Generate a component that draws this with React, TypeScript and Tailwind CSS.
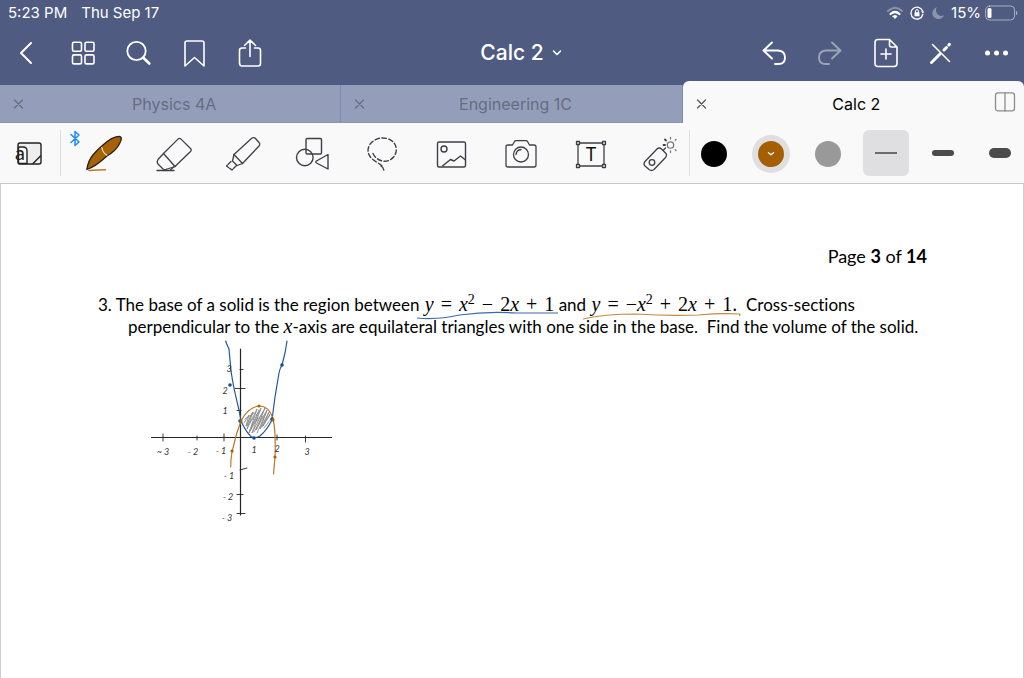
import React from 'react'
import type { ReactNode } from 'react'

interface IconProps {
  w: number
  h: number
  stroke?: number
  className?: string
  children: ReactNode
}

function Icon({ w, h, stroke = 1.6, className = '', children }: IconProps) {
  return (
    <svg
      width={w}
      height={h}
      viewBox={`0 0 ${w} ${h}`}
      fill="none"
      stroke="currentColor"
      strokeWidth={stroke}
      strokeLinecap="round"
      strokeLinejoin="round"
      className={className}
      aria-hidden="true"
    >
      {children}
    </svg>
  )
}

interface Action {
  label: string
  icon: ReactNode
  dim?: boolean
}

const LEFT_ACTIONS: Action[] = [
  {
    label: 'Back',
    icon: (
      <Icon w={28} h={28} stroke={2}>
        <path d="M19 4 9 14l10 10" />
      </Icon>
    ),
  },
  {
    label: 'Thumbnails',
    icon: (
      <Icon w={28} h={28}>
        <rect x="4.500" y="3.300" width="9" height="9" rx="1.5" />
        <rect x="17" y="3.300" width="9" height="9" rx="1.5" />
        <rect x="4.500" y="15.900" width="9" height="9" rx="1.5" />
        <rect x="17" y="15.900" width="9" height="9" rx="1.5" />
      </Icon>
    ),
  },
  {
    label: 'Search',
    icon: (
      <Icon w={28} h={28} stroke={1.8}>
        <circle cx="12.5" cy="12" r="9.2" />
        <path d="m19.300 18.700 6 5.800" strokeWidth="2.6" />
      </Icon>
    ),
  },
  {
    label: 'Bookmark',
    icon: (
      <Icon w={28} h={30}>
        <path d="M5 28V5Q5 3 7 3h15q2 0 2 2v23l-9.500-8.500Z" />
      </Icon>
    ),
  },
  {
    label: 'Share',
    icon: (
      <Icon w={28} h={30}>
        <path d="M9.500 10H6q-2.500 0-2.500 2.500v12Q3.500 28 6 28h16q2.500 0 2.500-2.500v-13Q24.500 10 22 10h-3.500M14 18.500V2.300M8.500 7.500 14 2.100l5.500 5.400" />
      </Icon>
    ),
  },
]

const RIGHT_ACTIONS: Action[] = [
  {
    label: 'Undo',
    icon: (
      <Icon w={28} h={28} stroke={1.9}>
        <path d="M12 3.500 3.500 11.500l8.500 8M4 11.500h14q7 .5 7 7 0 6.500-6.500 6.500h-3.500" />
      </Icon>
    ),
  },
  {
    label: 'Redo',
    dim: true,
    icon: (
      <Icon w={28} h={28} stroke={1.9}>
        <path d="M16 3.500l8.500 8-8.500 8M24 11.500H10q-7 .5-7 7 0 6.500 6.500 6.500H13" />
      </Icon>
    ),
  },
  {
    label: 'Add page',
    icon: (
      <Icon w={28} h={30}>
        <path d="M17.500 1.500H6Q3 1.500 3 4.500v21q0 3 3 3h16q3 0 3-3V9Zm0 0V7q0 2 2 2H25M14 11v10M9 16h10" />
      </Icon>
    ),
  },
  {
    label: 'Read only',
    icon: (
      <Icon w={28} h={28}>
        <path d="m4.500 5.500 17 17" />
        <path d="m5.500 21.500 6.500-6.500M16 11l2.500-2.500" strokeWidth="3" />
        <path d="m3.500 23.500 1-1M20.800 6l.6-.6" strokeWidth="3" />
      </Icon>
    ),
  },
  {
    label: 'More',
    icon: (
      <Icon w={28} h={28}>
        <g fill="currentColor" stroke="none">
          <circle cx="3.500" cy="14" r="2.500" />
          <circle cx="12.500" cy="14" r="2.500" />
          <circle cx="21.500" cy="14" r="2.500" />
        </g>
      </Icon>
    ),
  },
]

const TOOLS: Action[] = [
  {
    label: 'Pen',
    icon: (
      <Icon w={38} h={38} stroke={1.3} className="text-[#222222]">
        <path d="M3 36.500q9-.8 16.500-.8" stroke="#b9792a" strokeWidth="1.600" />
        <path
          d="M0.800 35.500c1-6 3-11 6.500-15 3-3.500 5.500-6 8.500-8.500C20.500 7.500 27.500 2.500 33 2.300c3.500.2 2.500 4 .5 7.500C31 15 27 18.500 21 22 16 26.500 9 33 .8 35.500Z"
          fill="#a86206"
        />
        <path d="M15.800 13.500c.8 4 2 6 5 7.500" stroke="#f8e8c8" strokeWidth="1.200" />
      </Icon>
    ),
  },
  {
    label: 'Eraser',
    icon: (
      <Icon w={38} h={38} stroke={1.3}>
        <path d="M8.500 19.500 23 5.100q1.500-1.400 3 0L35.500 14.500q1.500 1.500 0 3L20 32.500Z" />
        <path d="M8.500 19.500 3 25.500q-1.500 2.500 0 4.500l5 5q2 1.500 4 0L20.500 32.500" />
        <path d="M2 36.500h17" />
        <path d="m15.500 36 3-3" />
      </Icon>
    ),
  },
  {
    label: 'Highlighter',
    icon: (
      <Icon w={38} h={38} stroke={1.3}>
        <path d="m9 20.500 18-16.500q2-1 3.500.5l3.500 4q1.500 1.500 0 3.500L17.500 29.500Z" />
        <path d="m9 20.500-1.500 6.500 4.500 4.500 5.500-2" />
        <path d="m6 27.500-4.500 4.500L7 36l4.500-4.500" strokeDasharray="4 1.200" />
      </Icon>
    ),
  },
  {
    label: 'Shapes',
    icon: (
      <Icon w={38} h={38} stroke={1.4}>
        <rect x="12" y="4.500" width="15.500" height="15.500" rx="1.200" />
        <circle cx="10.800" cy="23.500" r="8.300" />
        <path d="M34 20.500v14.500L22.500 29q-1.500-1 0-2Z" />
      </Icon>
    ),
  },
  {
    label: 'Lasso',
    icon: (
      <Icon w={38} h={38} stroke={1.4}>
        <g strokeDasharray="4.500 2.500">
          <path d="M9 19.500C14 30 29 30 32 18 34 8 24.500 3.500 17.500 4 10 4.500 2 11 4.500 19.500 7 27 16 29 18 32" />
        </g>
        <path d="M17 32q2.500 1.500 2.800 4" />
      </Icon>
    ),
  },
  {
    label: 'Image',
    icon: (
      <Icon w={38} h={38} stroke={1.400}>
        <rect x="4.500" y="8" width="28" height="25" rx="1.500" />
        <circle cx="11" cy="15" r="3" />
        <path d="m9.500 32 8-6.500 3.500 1.500 6.500-5 5 4" />
      </Icon>
    ),
  },
  {
    label: 'Camera',
    icon: (
      <Icon w={38} h={38} stroke={1.300}>
        <path d="M4 13q0-2 2-2h4.500l2-3.500q.5-.8 1.500-.8h10q1 0 1.500.8l2 3.500H32q2 0 2 2v18q0 2-2 2H6q-2 0-2-2Z" />
        <circle cx="19" cy="20.500" r="7.500" />
        <path d="M14 20.500q.5-4.500 5-5" />
      </Icon>
    ),
  },
  {
    label: 'Text',
    icon: (
      <Icon w={38} h={38} stroke={1.300}>
        <path d="M6 10.500v20M32 10.500v20M7.500 9h23M7.500 32h23" />
        <rect x="4.500" y="7.500" width="3" height="3" fill="#f9f9f9" />
        <rect x="30.500" y="7.500" width="3" height="3" fill="#f9f9f9" />
        <rect x="4.500" y="30.500" width="3" height="3" fill="#f9f9f9" />
        <rect x="30.500" y="30.500" width="3" height="3" fill="#f9f9f9" />
        <text
          x="19"
          y="27"
          textAnchor="middle"
          fill="#111111"
          stroke="none"
          className="font-['Inter',sans-serif] text-[18px]"
        >
          T
        </text>
      </Icon>
    ),
  },
  {
    label: 'Laser pointer',
    icon: (
      <Icon w={38} h={38} stroke={1.300}>
        <path d="M4 27.500 16 15q2-2 4.500 0l4 4q2 2 0 4.500L13 35.500q-2.500 2-5 0L4 32q-2-2 0-4.500Z" />
        <circle cx="11" cy="28.500" r="2.800" />
        <path d="m22.500 16 2-2" />
        <g stroke="#77777c">
          <circle cx="29.500" cy="11" r="3.200" />
          <path d="M29.500 3.500V5M29.500 17v1.500M35 5.500l-.8.8M35 16.500l-.8-.8" />
        </g>
        <path d="M22.500 11H24M24 5.500l1 1" strokeWidth="1.800" />
      </Icon>
    ),
  },
]

function ActionButton({ action }: { action: Action }) {
  return (
    <button
      type="button"
      aria-label={action.label}
      className={`flex h-10 w-10 items-center justify-center ${action.dim ? 'opacity-45' : ''}`}
    >
      {action.icon}
    </button>
  )
}

function StatusBar() {
  return (
    <div className="flex h-[25px] items-center justify-between pl-2 pr-1.5 text-[15px] leading-6">
      <div className="flex gap-3.5">
        <span>5:23 PM</span>
        <span>Thu Sep 17</span>
      </div>
      <div className="flex items-center gap-[5px]">
        <Icon w={18} h={14}>
          <path d="M2 5Q9-1.500 16 5" strokeWidth="2" opacity=".35" />
          <path d="M4.500 8Q9 4 13.500 8" strokeWidth="2.200" />
          <path d="m7 10.200 2 2.300 2-2.300Q9 8.800 7 10.200Z" fill="currentColor" strokeWidth="1" />
        </Icon>
        <Icon w={16} h={14} stroke={1.300}>
          <path d="M13.600 5A6 6 0 1 0 13.800 8.500" />
          <path d="m12 5.300 3.200.2-1.300 2.300Z" fill="currentColor" stroke="none" />
          <rect x="5.500" y="6.300" width="5" height="4" rx=".6" fill="currentColor" stroke="none" />
          <path d="M6.600 6.500V5a1.400 1.400 0 0 1 2.800 0v1.500" strokeWidth="1" />
        </Icon>
        <Icon w={16} h={14}>
          <path
            d="M7 1.200A6 6 0 1 0 14 9.200 5.500 5.500 0 0 1 7 1.200Z"
            fill="currentColor"
            stroke="none"
            opacity=".35"
          />
        </Icon>
        <div className="flex items-center gap-1">
          <span>15%</span>
          <Icon w={33} h={16} stroke={1}>
            <rect x=".6" y="1" width="29" height="14" rx="4" opacity=".5" />
            <rect x="2.500" y="3" width="4" height="10" rx="1.500" fill="currentColor" stroke="none" />
            <path d="M31.500 6.500q1.300 1.500 0 3Z" fill="currentColor" opacity=".5" />
          </Icon>
        </div>
      </div>
    </div>
  )
}

function CloseMark() {
  return (
    <Icon w={12} h={12} stroke={1.200}>
      <path d="m2.500 2 8 8M10.500 2l-8 8" />
    </Icon>
  )
}

function Tab({ title }: { title: string }) {
  return (
    <div className="flex h-[37px] flex-1 items-center border-r border-[#7f8aab] bg-[#949eba] text-[#656d82]">
      <button type="button" aria-label={`Close ${title}`} className="w-9 pl-3">
        <CloseMark />
      </button>
      <button type="button" className="flex-1 pr-7 text-center">
        {title}
      </button>
    </div>
  )
}

function Toolbar() {
  return (
    <div className="flex h-[61px] items-center border-b border-[#c9c9cb] bg-[#f9f9f9] text-[#3f3f47]">
      <button type="button" aria-label="Zoom window" className="flex w-[60px] justify-center pr-1">
        <Icon w={32} h={32} stroke={1.400} className="text-[#222222]">
          <path d="M6 8q0-2 2-2h19q2 0 2 2v17q0 2-2 2H8q-2 0-2-2Z" fill="#eeeeee" />
          <path d="M6.500 10H11q4 0 4 4v12.500H6.500Z" fill="#f9f9f9" />
          <path d="m21 26.500 7.500-7.500" />
          <text x="3" y="23" fill="#222222" stroke="none" className="font-['Lato',sans-serif] text-[20px]">
            a
          </text>
        </Icon>
      </button>
      <div className="flex h-[46px] flex-1 items-center justify-between border-l border-[#dedee0] pl-6 pr-[9px]">
        {TOOLS.map((tool) => (
          <div key={tool.label} className="relative">
            <ActionButton action={tool} />
            {tool.label === 'Pen' && (
              <Icon w={12} h={18} stroke={1.500} className="absolute -left-4 -top-1 text-[#1a8cf5]">
                <path d="m2 5.500 8 7.500-4 3.500v-14L10 6l-8 7.500" />
              </Icon>
            )}
          </div>
        ))}
      </div>
      <div className="flex h-[46px] w-[335px] items-center justify-between border-l border-[#dedee0] px-px">
        <button type="button" aria-label="Black" className="flex w-[46px] justify-center pt-0.5">
          <span className="size-[26px] rounded-full bg-black" />
        </button>
        <button type="button" aria-label="Brown" className="flex w-[46px] justify-center pt-0.5">
          <span className="flex size-[38px] items-center justify-center rounded-full bg-[#dfdfe2]">
            <span className="flex size-[26px] items-center justify-center rounded-full bg-[#a55f02] text-white">
              <Icon w={8} h={6} stroke={1.400}>
                <path d="m1.500 1.800 2.500 2 2.500-2" />
              </Icon>
            </span>
          </span>
        </button>
        <button type="button" aria-label="Gray" className="flex w-[46px] justify-center pt-0.5">
          <span className="size-[26px] rounded-full bg-[#999999]" />
        </button>
        <button
          type="button"
          aria-label="Thin stroke"
          className="flex size-[46px] items-center justify-center rounded-md bg-[#dfdfe2]"
        >
          <span className="h-0.5 w-[22px] bg-[#6b6b6e]" />
        </button>
        <button type="button" aria-label="Medium stroke" className="flex w-[46px] justify-center">
          <span className="h-1.5 w-[22px] rounded-full bg-[#4b4b4b]" />
        </button>
        <button type="button" aria-label="Thick stroke" className="flex w-[46px] justify-center">
          <span className="h-2.5 w-[22px] rounded-full bg-[#4b4b4b]" />
        </button>
      </div>
    </div>
  )
}

const AXIS_LABELS = [
  { x: 163, y: 455, text: '~ 3' },
  { x: 193, y: 455, text: '- 2' },
  { x: 221, y: 454, text: '- 1' },
  { x: 254, y: 453, text: '1' },
  { x: 277, y: 452, text: '2' },
  { x: 307, y: 455, text: '3' },
  { x: 229, y: 372, text: '3' },
  { x: 225, y: 394, text: '2' },
  { x: 225, y: 414, text: '1' },
  { x: 229, y: 479, text: '- 1' },
  { x: 228, y: 500, text: '- 2' },
  { x: 227, y: 521, text: '- 3' },
]

const BLUE_POINTS = [
  [282, 365],
  [230, 385],
  [240, 421],
  [254, 438],
  [272, 419],
]

const ORANGE_POINTS = [
  [259, 406],
  [241, 421],
  [273, 420],
  [232, 451],
  [275, 457],
]

function Sketch() {
  return (
    <svg
      width="200"
      height="190"
      viewBox="140 337 200 190"
      fill="none"
      strokeLinecap="round"
      strokeLinejoin="round"
      role="img"
      aria-label="Graph of both parabolas"
      className="ml-[139px]"
    >
      <path
        d="M244 423l5-8-3 11 7-14-6 17 10-20-8 24 12-25-9 25 13-25-9 22 11-20-7 19 9-17-6 14 7-11M245 419l9-6M250 431l8-14M262 427l8-13M259 410l-9 20M252 413l-5 12M266 413l-9 20M254 432l9-16M247 426l7-9M263 412l-6 9M271 419l-7 9M256 415l4-4"
        stroke="#8a8a8a"
        strokeWidth=".9"
      />
      <g stroke="#252525">
        <path d="M240.500 349v166M151.500 437.500h180" strokeWidth="1.200" />
        <path
          d="M163 434v7M197 436v4M224 434v7M277 435v5M305.500 436v6M240 369.500h3M235 388.500h10M237 410.500h4M240 470l7-2M237 494.500h6M237 513.500h8"
          strokeWidth=".9"
        />
      </g>
      <path
        d="M225.700 341l1 3 2.300 5 1.700 19c1 9 2.600 17 4.300 25l4 17 2 11q5 11 10 15.500 3.500 2.500 9-.5 7-6 12-16l3-23 4-24q1-5 3-8l3-12 2-12"
        stroke="#24569a"
        strokeWidth="1.200"
      />
      <path
        d="M230.700 467q0-8 1.300-15l4.500-18 4.500-13c4-8 10-14 18-15 8 0 12 6 14 13 3 12 2.500 25 2 38l-1.500 17"
        stroke="#b8792a"
        strokeWidth="1.200"
      />
      {BLUE_POINTS.map(([x, y]) => (
        <circle key={`${x}-${y}`} cx={x} cy={y} r="1.800" fill="#164f96" />
      ))}
      {ORANGE_POINTS.map(([x, y]) => (
        <circle key={`${x}-${y}`} cx={x} cy={y} r="1.600" fill="#a75f08" />
      ))}
      {AXIS_LABELS.map(({ x, y, text }) => (
        <text
          key={`${x}-${y}`}
          x={x}
          y={y}
          textAnchor="middle"
          fill="#333333"
          className="font-['Lato',sans-serif] text-[9px] italic"
        >
          {text}
        </text>
      ))}
    </svg>
  )
}

function Equation({ children, ink }: { children: ReactNode; ink: ReactNode }) {
  return (
    <span className="relative ml-px inline-block font-['Liberation_Serif',serif] text-[20px] leading-[22px]">
      {children}
      <svg
        viewBox="0 0 150 10"
        preserveAspectRatio="none"
        fill="none"
        strokeWidth="1.200"
        className="absolute -left-2 top-[17px] h-2.5 w-[calc(100%+12px)]"
        aria-hidden="true"
      >
        {ink}
      </svg>
    </span>
  )
}

function Op({ children }: { children: ReactNode }) {
  return <span className="mx-[7px]">{children}</span>
}

function Squared() {
  return (
    <>
      <i>x</i>
      <sup className="text-[14px]">2</sup>
    </>
  )
}

export default function App() {
  return (
    <div className="flex min-h-screen flex-col bg-white font-['Inter',sans-serif]">
      <header className="bg-[#4f5b80] text-white">
        <StatusBar />
        <nav className="grid h-14 grid-cols-[1fr_auto_1fr] items-center px-1.5">
          <div className="flex gap-4">
            {LEFT_ACTIONS.map((action) => (
              <ActionButton key={action.label} action={action} />
            ))}
          </div>
          <button type="button" className="flex items-center gap-2 pl-[18px] text-[21px] font-medium">
            Calc 2
            <Icon w={10} h={8} stroke={1.600}>
              <path d="m1.500 2 3.500 3.500L8.500 2" />
            </Icon>
          </button>
          <div className="flex justify-end gap-4">
            {RIGHT_ACTIONS.map((action) => (
              <ActionButton key={action.label} action={action} />
            ))}
          </div>
        </nav>
        <div className="flex h-[42px] items-end text-[16px]">
          <div className="flex flex-2 border-b border-[#8b96b5]">
            <Tab title="Physics 4A" />
            <Tab title="Engineering 1C" />
          </div>
          <div className="flex h-full flex-1 items-center rounded-t-md bg-[#f9f9f9] pt-1 text-black">
            <button type="button" aria-label="Close Calc 2" className="w-9 pl-3 text-[#555555]">
              <CloseMark />
            </button>
            <button type="button" className="flex-1 text-center">
              Calc 2
            </button>
            <button type="button" aria-label="Split view" className="w-[30px] pb-1 text-[#8b8b8e]">
              <Icon w={22} h={20} stroke={1.300}>
                <rect x="1.500" y=".8" width="19" height="18" rx="2.500" />
                <path d="M11 1v18" />
              </Icon>
            </button>
          </div>
        </div>
      </header>
      <Toolbar />
      <main className="flex-1 border-x border-[#cfcfcf] pt-[61px] font-['Lato',sans-serif] text-[17px] leading-[22px] text-black [font-variant-ligatures:none]">
        <p className="pr-24 text-right text-[18px]">
          Page <b>3</b> of <b>14</b>
        </p>
        <p className="mt-[26px] whitespace-nowrap pl-[97px]">
          <span className="block h-[22px]">
            3. The base of a solid is the region between{' '}
            <Equation ink={<path d="M0 8q22 2 45-3 30-4 60-2h45" stroke="#3a6ba8" />}>
              <i>y</i>
              <Op>=</Op>
              <Squared />
              <Op>−</Op>2<i>x</i>
              <Op>+</Op>1
            </Equation>{' '}
            and{' '}
            <Equation ink={<path d="M0 9q20-5 50-5 30 2 60 1 20-2 39-1v2" stroke="#c08a40" />}>
              <i>y</i>
              <Op>=</Op>−<Squared />
              <Op>+</Op>2<i>x</i>
              <Op>+</Op>1.
            </Equation>
            &nbsp; Cross-sections
          </span>
          <span className="block h-[22px] pl-[30px]">
            perpendicular to the <i className="font-['Liberation_Serif',serif] text-[20px]">x</i>-axis are
            equilateral triangles with one side in the base.&nbsp; Find the volume of the solid.
          </span>
        </p>
        <Sketch />
      </main>
    </div>
  )
}
